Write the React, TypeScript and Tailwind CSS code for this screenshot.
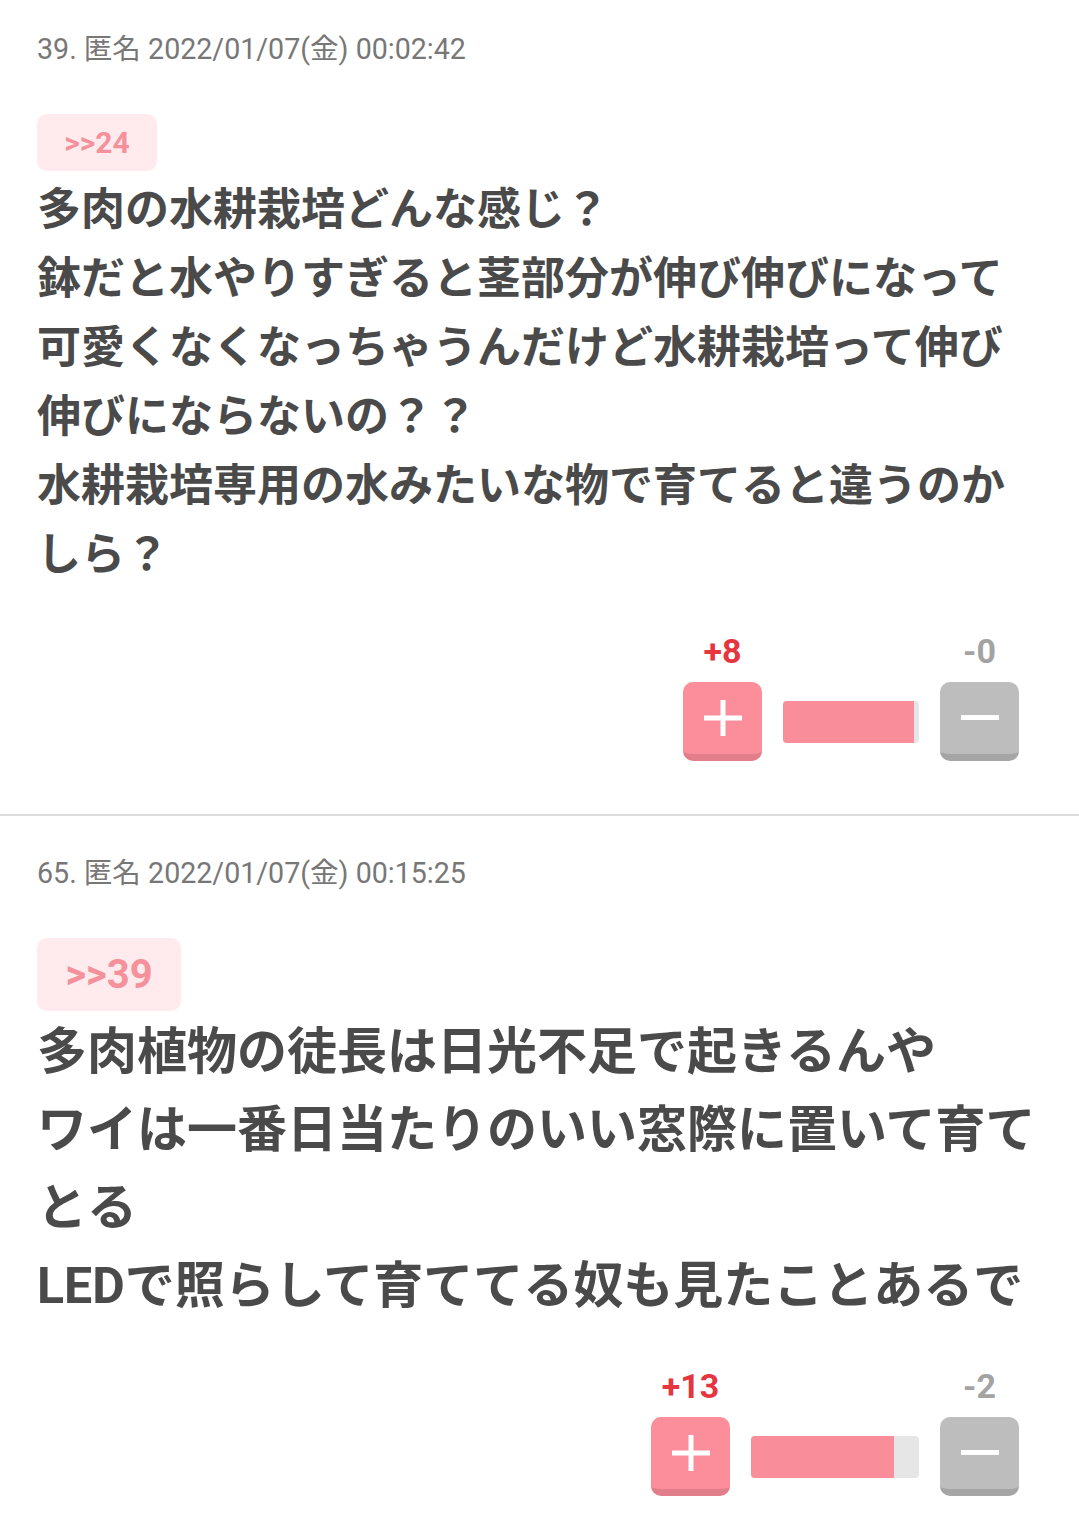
import React from "react";

type Post = {
  no: number;
  date: string;
  anchor: string;
  lines: string[];
  plus: number;
  minus: number;
  barWidth: number;
  fill: number;
  big?: boolean;
};

const posts: Post[] = [
  {
    no: 39,
    date: "2022/01/07(金) 00:02:42",
    anchor: ">>24",
    lines: [
      "多肉の水耕栽培どんな感じ？",
      "鉢だと水やりすぎると茎部分が伸び伸びになって",
      "可愛くなくなっちゃうんだけど水耕栽培って伸び",
      "伸びにならないの？？",
      "水耕栽培専用の水みたいな物で育てると違うのか",
      "しら？",
    ],
    plus: 8,
    minus: 0,
    barWidth: 136,
    fill: 96,
  },
  {
    no: 65,
    date: "2022/01/07(金) 00:15:25",
    anchor: ">>39",
    lines: [
      "多肉植物の徒長は日光不足で起きるんや",
      "ワイは一番日当たりのいい窓際に置いて育て",
      "とる",
      "LEDで照らして育ててる奴も見たことあるで",
    ],
    plus: 13,
    minus: 2,
    barWidth: 168,
    fill: 85,
    big: true,
  },
];

const font = { fontFamily: '"Roboto", "Noto Sans CJK JP", sans-serif' };

const Votes = ({ post }: { post: Post }) => (
  <div className="flex justify-end pr-[60px]">
    <div className="grid grid-cols-[79px_auto_79px] gap-x-[21px] gap-y-[11px] items-center">
      <div className="text-center text-[34px] leading-[40px] font-bold text-[#e5363f]">
        +{post.plus}
      </div>
      <div />
      <div className="text-center text-[34px] leading-[40px] font-bold text-[#a3a3a3]">
        -{post.minus}
      </div>

      <div className="h-[79px] w-[79px] rounded-[10px] bg-[#fb8e9a] border-b-[7px] border-[#e27e8a] flex items-center justify-center">
        <svg width="38" height="36" viewBox="0 0 38 36">
          <rect x="16.5" y="0" width="5" height="36" fill="#fff" />
          <rect x="0" y="15.5" width="38" height="5" fill="#fff" />
        </svg>
      </div>
      <div
        className="h-[42px] rounded-[4px] bg-[#e6e6e6] overflow-hidden flex"
        style={{ width: post.barWidth }}
      >
        <div className="h-full bg-[#f98d99]" style={{ width: `${post.fill}%` }} />
      </div>
      <div className="h-[79px] w-[79px] rounded-[10px] bg-[#bdbdbd] border-b-[7px] border-[#a5a5a5] flex items-center justify-center">
        <svg width="38" height="6" viewBox="0 0 38 6">
          <rect x="0" y="0" width="38" height="5" fill="#fff" />
        </svg>
      </div>
    </div>
  </div>
);

const PostItem = ({ post, first }: { post: Post; first: boolean }) => (
  <div className={first ? "pt-[29px] pb-[53px]" : "pt-[37px] pb-[26px]"}>
    <div className="px-[37px] text-[28.6px] leading-[40px] text-[#777777]">
      {post.no}. 匿名 {post.date}
    </div>
    <div className="px-[37px] mt-[45px]">
      <div
        className={
          post.big
            ? "w-[144px] h-[73px] rounded-[10px] bg-[#ffebee] flex items-center justify-center text-[40px] font-bold text-[#f4919b]"
            : "w-[120px] h-[57px] rounded-[10px] bg-[#ffebee] flex items-center justify-center text-[30px] font-bold text-[#f4919b]"
        }
      >
        {post.anchor}
      </div>
    </div>
    <div
      className={
        post.big
          ? "px-[37px] mt-[2px] text-[50px] leading-[78px] font-bold text-[#4a4a4a]"
          : "px-[37px] mt-[5px] text-[44px] leading-[69px] font-bold text-[#4a4a4a]"
      }
    >
      {post.lines.map((l, i) => (
        <div key={i} className="whitespace-nowrap">
          {l}
        </div>
      ))}
    </div>
    <div className="mt-[41px]">
      <Votes post={post} />
    </div>
  </div>
);

export default function App() {
  return (
    <div className="w-[1079px] min-h-[1522px] bg-white" style={font}>
      <PostItem post={posts[0]} first />
      <div className="h-[2px] bg-[#dddddd]" />
      <PostItem post={posts[1]} first={false} />
    </div>
  );
}
